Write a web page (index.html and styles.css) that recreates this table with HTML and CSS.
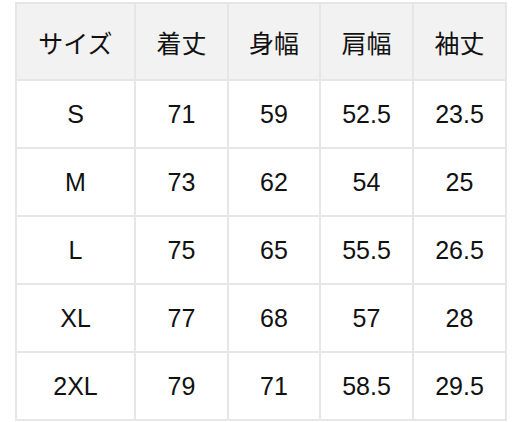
FILE: index.html
```html
<!DOCTYPE html>
<html lang="ja">
<head>
<meta charset="utf-8">
<title>サイズ表</title>
<link rel="stylesheet" href="styles.css">
</head>
<body>
<div class="wrap">
  <table class="size-table">
    <thead>
      <tr>
        <th class="c-size">サイズ</th>
        <th class="c-a">着丈</th>
        <th class="c-b">身幅</th>
        <th class="c-c">肩幅</th>
        <th class="c-d">袖丈</th>
      </tr>
    </thead>
    <tbody>
      <tr><td>S</td><td>71</td><td>59</td><td>52.5</td><td>23.5</td></tr>
      <tr><td>M</td><td>73</td><td>62</td><td>54</td><td>25</td></tr>
      <tr><td>L</td><td>75</td><td>65</td><td>55.5</td><td>26.5</td></tr>
      <tr><td>XL</td><td>77</td><td>68</td><td>57</td><td>28</td></tr>
      <tr><td>2XL</td><td>79</td><td>71</td><td>58.5</td><td>29.5</td></tr>
    </tbody>
  </table>
</div>
</body>
</html>
```
FILE: styles.css
```css
html, body {
  margin: 0;
  padding: 0;
  background: #ffffff;
}

.wrap {
  padding: 2px 5px 0 15px;
}

.size-table {
  box-sizing: border-box;
  width: 492px;
  table-layout: fixed;
  border-collapse: separate;
  border-spacing: 0;
  border-left: 2px solid #e6e6e6;
  border-top: 2px solid #e6e6e6;
  font-family: "Liberation Sans", "Noto Sans CJK JP", sans-serif;
  font-size: 25px;
  color: #111111;
}

.size-table th,
.size-table td {
  box-sizing: border-box;
  padding: 0;
  text-align: center;
  vertical-align: middle;
  font-weight: normal;
  border-right: 2px solid #e6e6e6;
  border-bottom: 2px solid #e6e6e6;
}

.size-table th {
  height: 77px;
  background: #f2f2f2;
  font-family: "Noto Sans CJK JP", "Liberation Sans", sans-serif;
}

.size-table td {
  height: 68px;
}

.c-size { width: 119px; }
.c-a { width: 93px; }
.c-b { width: 92px; }
.c-c { width: 93px; }
.c-d { width: 93px; }
```
